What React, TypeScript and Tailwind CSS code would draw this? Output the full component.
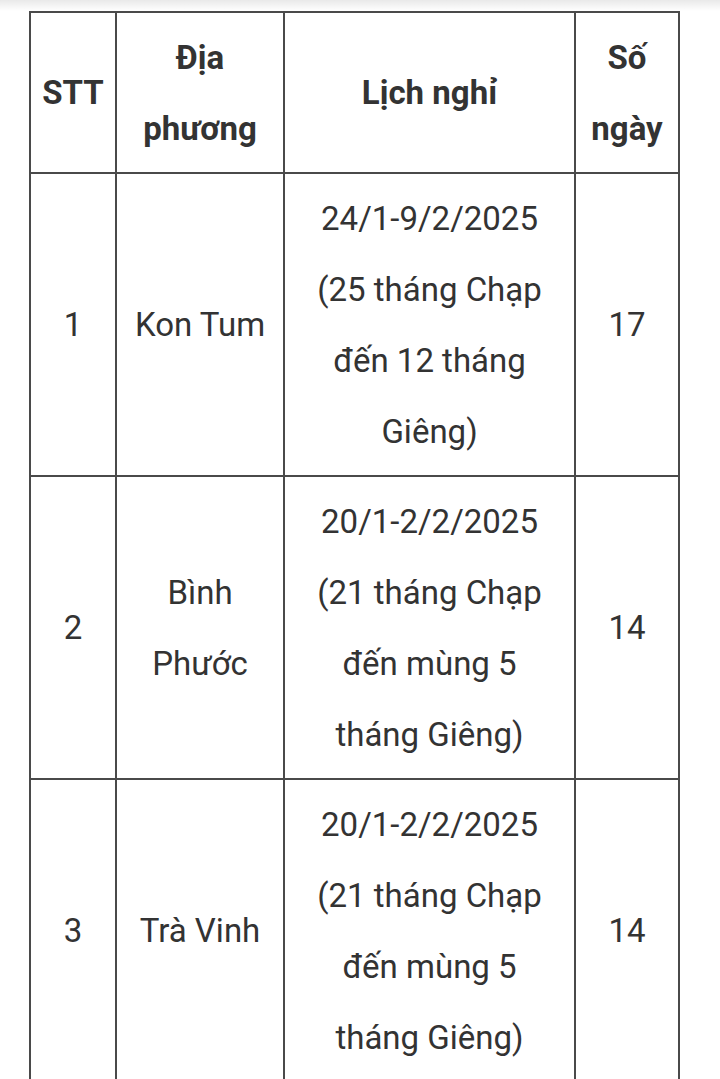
const rows = [
  {
    stt: '1',
    place: ['Kon Tum'],
    schedule: ['24/1-9/2/2025', '(25 tháng Chạp', 'đến 12 tháng', 'Giêng)'],
    days: '17',
  },
  {
    stt: '2',
    place: ['Bình', 'Phước'],
    schedule: ['20/1-2/2/2025', '(21 tháng Chạp', 'đến mùng 5', 'tháng Giêng)'],
    days: '14',
  },
  {
    stt: '3',
    place: ['Trà Vinh'],
    schedule: ['20/1-2/2/2025', '(21 tháng Chạp', 'đến mùng 5', 'tháng Giêng)'],
    days: '14',
  },
]

function Lines({ items }: { items: string[] }) {
  return (
    <>
      {items.map((line) => (
        <div key={line} className="whitespace-nowrap">
          {line}
        </div>
      ))}
    </>
  )
}

export default function App() {
  const cell = 'border-2 border-[#4a4a4a] px-2 py-[8.5px] text-center align-middle'

  return (
    <div
      className="w-[720px] h-[1079px] overflow-hidden bg-white text-[#333333]"
      style={{ fontFamily: 'Roboto, "Noto Sans", sans-serif' }}
    >
      <div className="h-[11px] bg-gradient-to-b from-[#e9e9e9] to-white" />
      <div className="pl-[29px]">
        <table className="table-fixed border-collapse text-[33px] leading-[71px]">
          <colgroup>
            <col className="w-[86px]" />
            <col className="w-[168px]" />
            <col className="w-[291px]" />
            <col className="w-[104px]" />
          </colgroup>
          <thead>
            <tr className="font-bold">
              <th className={cell}>STT</th>
              <th className={cell}>
                <Lines items={['Địa', 'phương']} />
              </th>
              <th className={cell}>Lịch nghỉ</th>
              <th className={cell}>
                <Lines items={['Số', 'ngày']} />
              </th>
            </tr>
          </thead>
          <tbody>
            {rows.map((row) => (
              <tr key={row.stt}>
                <td className={cell}>{row.stt}</td>
                <td className={cell}>
                  <Lines items={row.place} />
                </td>
                <td className={cell}>
                  <Lines items={row.schedule} />
                </td>
                <td className={cell}>{row.days}</td>
              </tr>
            ))}
          </tbody>
        </table>
      </div>
    </div>
  )
}
